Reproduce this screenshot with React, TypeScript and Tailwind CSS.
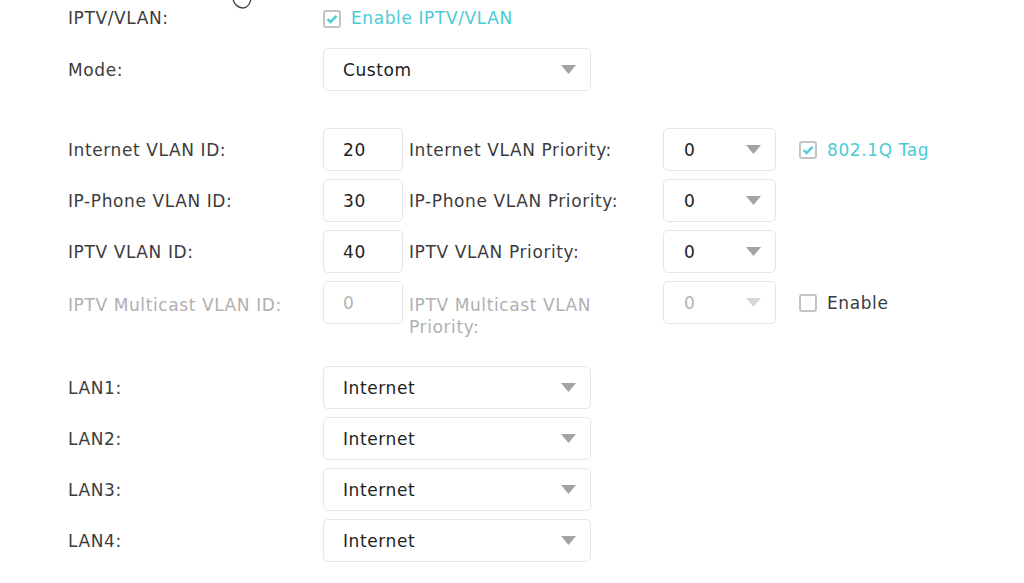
import React from 'react';

const TEAL = 'text-[#4acbd6]';

const Arrow = ({ faded }: { faded?: boolean }) => (
  <svg width="15" height="9" viewBox="0 0 15 9" className="shrink-0">
    <path d="M0 0 L15 0 L7.5 9 Z" fill={faded ? '#d8d8d8' : '#a3a3a3'} />
  </svg>
);

const Check = ({ checked }: { checked?: boolean }) => (
  <span className="w-[18px] h-[18px] rounded-[3px] border-2 border-[#c4c4c4] bg-white flex items-center justify-center shrink-0">
    {checked && (
      <svg width="12" height="10" viewBox="0 0 12 10">
        <path d="M1.5 5 L4.5 8 L10.5 1.8" stroke="#4acbd6" strokeWidth="2.4" fill="none" />
      </svg>
    )}
  </span>
);

const Select = ({ value, wide, disabled }: { value: string; wide?: boolean; disabled?: boolean }) => (
  <div
    className={`h-[43px] ${wide ? 'w-[268px] pl-[19px] pr-[14px]' : 'w-[113px] pl-[20px] pr-[14px]'} rounded-[5px] border border-[#e6e6e6] bg-white flex items-center justify-between shrink-0 ${
      disabled ? 'text-[#b3b3b3]' : 'text-[#222]'
    }`}
  >
    <span className="pt-[3px]">{value}</span>
    <Arrow faded={disabled} />
  </div>
);

const NumBox = ({ value, disabled }: { value: string; disabled?: boolean }) => (
  <div
    className={`h-[43px] w-[80px] pl-[19px] pt-[3px] rounded-[5px] border border-[#e6e6e6] bg-white flex items-center shrink-0 ${
      disabled ? 'text-[#b3b3b3]' : 'text-[#222]'
    }`}
  >
    {value}
  </div>
);

const vlanRows = [
  { id: 'Internet VLAN ID:', val: '20', pri: 'Internet VLAN Priority:', tag: true },
  { id: 'IP-Phone VLAN ID:', val: '30', pri: 'IP-Phone VLAN Priority:' },
  { id: 'IPTV VLAN ID:', val: '40', pri: 'IPTV VLAN Priority:' },
];

export default function App() {
  return (
    <div className="relative w-[1024px] h-[583px] bg-white overflow-hidden text-[17px] tracking-[0.6px] text-[#3c3c3c] font-['DejaVu_Sans',Verdana,sans-serif]">
      {/* mouse pointer peeking in at the top */}
      <svg className="absolute left-[230px] top-[-4px]" width="24" height="16" viewBox="0 0 24 16">
        <path d="M3 3 C4 8 8 12 13 12 C17 12 20 8 21 3" fill="white" stroke="#444" strokeWidth="1.4" />
      </svg>

      <div className="pl-[68px] flex flex-col">
        <div className="h-[36px] pt-[2px] flex items-center">
          <div className="w-[255px]">IPTV/VLAN:</div>
          <div className="flex items-center gap-[10px]">
            <Check checked />
            <span className={TEAL}>Enable IPTV/VLAN</span>
          </div>
        </div>

        <div className="mt-[12px] flex items-center">
          <div className="w-[255px] pt-[3px]">Mode:</div>
          <Select value="Custom" wide />
        </div>

        <div className="mt-[37px] flex flex-col gap-[8px]">
          {vlanRows.map((r) => (
            <div key={r.id} className="flex items-center">
              <div className="w-[255px] pt-[3px]">{r.id}</div>
              <NumBox value={r.val} />
              <div className="w-[260px] pl-[6px] pt-[3px]">{r.pri}</div>
              <Select value="0" />
              {r.tag && (
                <div className="ml-[23px] flex items-center gap-[10px]">
                  <Check checked />
                  <span className={`${TEAL} pt-[3px]`}>802.1Q Tag</span>
                </div>
              )}
            </div>
          ))}
          <div className="flex items-start text-[#b0b0b0]">
            <div className="w-[255px] leading-[22px] mt-[13px]">IPTV Multicast VLAN ID:</div>
            <NumBox value="0" disabled />
            <div className="w-[260px] pl-[6px] pr-[50px] leading-[22px] mt-[13px]">IPTV Multicast VLAN Priority:</div>
            <Select value="0" disabled />
            <div className="ml-[23px] h-[43px] flex items-center gap-[10px] text-[#3c3c3c]">
              <Check />
              <span className="pt-[3px]">Enable</span>
            </div>
          </div>
        </div>

        <div className="mt-[28px] flex flex-col gap-[8px]">
          {['LAN1:', 'LAN2:', 'LAN3:', 'LAN4:'].map((l) => (
            <div key={l} className="flex items-center">
              <div className="w-[255px] pt-[3px]">{l}</div>
              <Select value="Internet" wide />
            </div>
          ))}
        </div>
      </div>
    </div>
  );
}
